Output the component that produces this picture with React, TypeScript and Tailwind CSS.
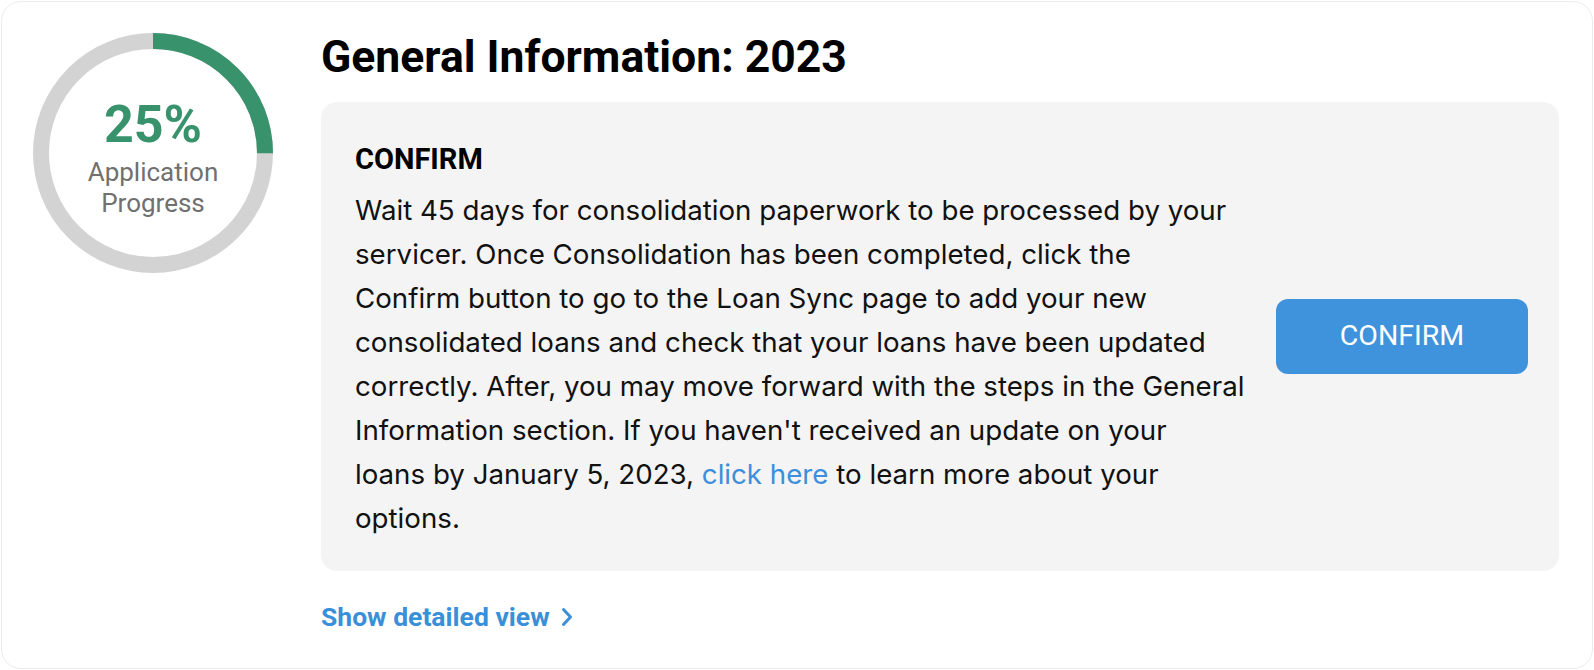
import React from 'react';

const ProgressRing: React.FC<{ percent: number }> = ({ percent }) => {
  const r = 112;
  const c = 2 * Math.PI * r;
  return (
    <div className="relative w-[240px] h-[240px] shrink-0">
      <svg width="240" height="240" viewBox="0 0 240 240" className="block">
        <circle cx="120" cy="120" r={r} fill="none" stroke="#d3d3d3" strokeWidth="16" />
        <circle
          cx="120"
          cy="120"
          r={r}
          fill="none"
          stroke="#38936c"
          strokeWidth="16"
          strokeDasharray={`${(c * percent) / 100} ${c}`}
          transform="rotate(-90 120 120)"
        />
      </svg>
      <div className="absolute inset-0 flex flex-col items-center justify-center pt-[10px]">
        <span className="font-['Roboto'] font-bold text-[52px] leading-[56px] text-[#38936c]">{percent}%</span>
        <span className="font-['Roboto'] text-[26px] leading-[31px] text-[#707070] text-center mt-[4px]">
          Application
          <br />
          Progress
        </span>
      </div>
    </div>
  );
};

export default function App() {
  return (
    <div className="w-[1594px] h-[670px] bg-white p-[1px]">
      <div className="h-full rounded-[20px] border border-[#ececec] bg-white flex gap-[48px] pl-[31px] pt-[31px]">
        <ProgressRing percent={25} />
        <div className="flex flex-col w-[1238px]">
          <h1 className="font-['Roboto'] font-bold text-[44.5px] leading-[48px] text-black">
            General Information: 2023
          </h1>
          <div className="mt-[21px] bg-[#f4f4f4] rounded-[16px] pl-[34px] pr-[31px] pt-[40px] pb-[31px] flex items-center">
            <div className="w-[905px]">
              <h2 className="font-['Roboto'] font-bold text-[29px] leading-[34px] text-black">CONFIRM</h2>
              <p className="mt-[12px] font-['Inter'] text-[27.7px] leading-[44px] text-[#111]">
                Wait 45 days for consolidation paperwork to be processed by your
                <br />
                servicer. Once Consolidation has been completed, click the
                <br />
                Confirm button to go to the Loan Sync page to add your new
                <br />
                consolidated loans and check that your loans have been updated
                <br />
                correctly. After, you may move forward with the steps in the General
                <br />
                Information section. If you haven't received an update on your
                <br />
                loans by January 5, 2023, <a className="text-[#3d8fdb]">click here</a> to learn more about your
                <br />
                options.
              </p>
            </div>
            <button className="ml-auto mb-[9px] w-[252px] h-[75px] rounded-[12px] bg-[#3f93dc] text-white font-['Roboto'] text-[28.5px]">
              CONFIRM
            </button>
          </div>
          <a className="mt-[30px] flex items-center gap-[11px] font-['Roboto'] font-bold text-[26.5px] leading-[32px] text-[#3a8fd9]">
            Show detailed view
            <svg width="12" height="20" viewBox="0 0 12 20" fill="none">
              <path d="M2.5 2.5l7 7.5-7 7.5" stroke="#3a8fd9" strokeWidth="3" strokeLinecap="round" strokeLinejoin="round" />
            </svg>
          </a>
        </div>
      </div>
    </div>
  );
}
